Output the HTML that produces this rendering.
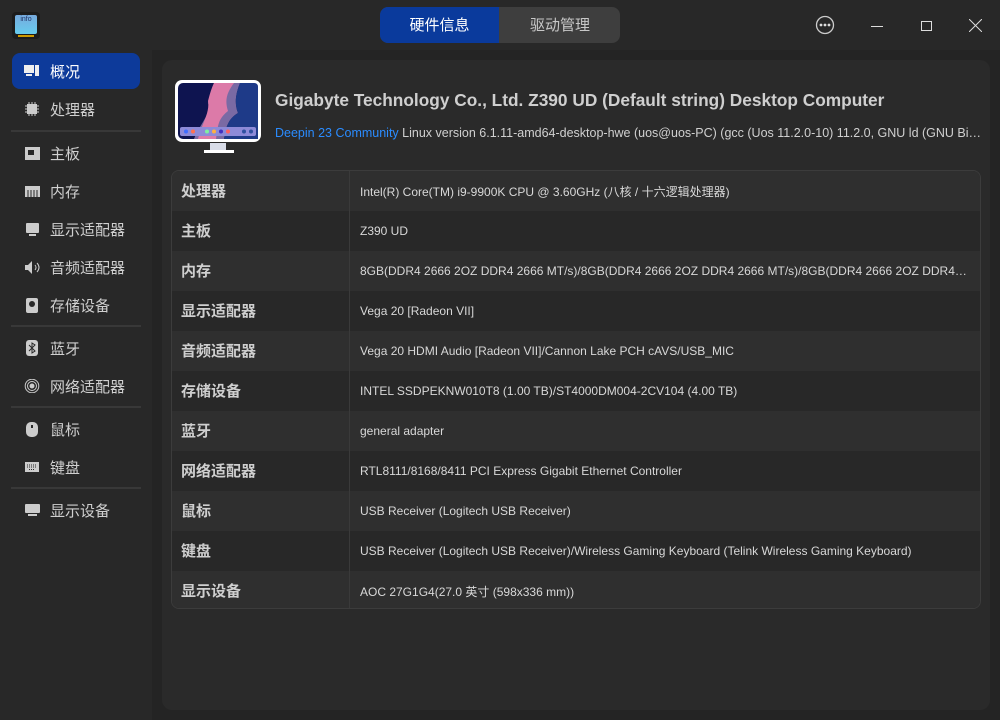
<!DOCTYPE html>
<html><head><meta charset="utf-8"><style>
*{margin:0;padding:0;box-sizing:border-box}
body{width:1000px;height:720px;background:#242424;font-family:"Liberation Sans","Noto Sans CJK SC",sans-serif;color:#d8d8d8;position:relative;overflow:hidden}
.title{position:absolute;left:0;top:0;width:1000px;height:50px;background:#282828}
.side{position:absolute;left:0;top:50px;width:152px;height:670px;background:#282828}
.item{position:absolute;left:12px;width:128px;height:36px;border-radius:8px;display:flex;align-items:center;font-size:15px;color:#d0d0d0}
.item .ic{width:16px;height:14px;margin-left:12px;margin-right:10px;display:flex;align-items:center;justify-content:center}
.item.sel{background:#0d3a9a;color:#fff}
.sep{position:absolute;left:11px;width:130px;height:2px;background:#383838}
.panel{position:absolute;left:162px;top:60px;width:828px;height:650px;background:#2a2a2a;border-radius:10px}
.table{position:absolute;left:171px;top:170px;width:810px;height:439px;border:1px solid #3c3c3c;border-radius:8px;overflow:hidden}
.row{height:40px;display:flex;align-items:center;font-size:12px;color:#d8d8d8}
.row:nth-child(odd){background:#2f2f2f}
.row:nth-child(even){background:#282828}
.row .k{width:178px;padding-left:9px;font-size:15px;font-weight:bold;color:#cfcfcf;height:100%;display:flex;align-items:center;border-right:1px solid #3a3a3a;padding-bottom:2px}
.row .v{padding-left:10px;white-space:nowrap;overflow:hidden;text-overflow:ellipsis;width:620px}
</style></head><body>
<div class="title">
 <div style="position:absolute;left:12px;top:12px;width:28px;height:27px;background:#1c1c1c;border-radius:4px">
  <div style="position:absolute;left:3px;top:3px;width:22px;height:19px;background:linear-gradient(#7ad,#6ce);border-radius:2px;font-size:7px;color:#236;text-align:center;line-height:10px">info</div>
  <div style="position:absolute;left:6px;top:23px;width:16px;height:2px;background:#c90"></div>
 </div>
 <div style="position:absolute;left:380px;top:7px;width:240px;height:36px;border-radius:8px;background:#3e3e3e;overflow:hidden;font-size:15px">
  <div style="position:absolute;left:0;top:0;width:119px;height:36px;background:#0a3a9c;color:#fff;text-align:center;line-height:38px">硬件信息</div>
  <div style="position:absolute;left:120px;top:0;width:120px;height:36px;color:#c8c8c8;text-align:center;line-height:38px">驱动管理</div>
 </div>
 <svg style="position:absolute;left:815px;top:15px" width="20" height="20"><circle cx="10" cy="10" r="8.5" fill="none" stroke="#ccc" stroke-width="1.3"/><circle cx="6" cy="10" r="1.4" fill="#ddd"/><circle cx="10" cy="10" r="1.4" fill="#ddd"/><circle cx="14" cy="10" r="1.4" fill="#ddd"/></svg>
 <div style="position:absolute;left:871px;top:26px;width:12px;height:1px;background:#ddd"></div>
 <div style="position:absolute;left:921px;top:21px;width:11px;height:10px;border:1px solid #ddd"></div>
 <svg style="position:absolute;left:969px;top:19px" width="13" height="13"><path d="M0 0L13 13M13 0L0 13" stroke="#ddd" stroke-width="1"/></svg>
</div>
<div class="side">
 <div class="item sel" style="top:3px"><span class="ic"><svg width="16" height="12"><rect x="0" y="0" width="10" height="8" fill="#eee"/><rect x="2" y="9" width="6" height="2" fill="#eee"/><rect x="11" y="0" width="4" height="11" fill="#eee"/></svg></span>概况</div>
 <div class="item" style="top:41px"><span class="ic"><svg width="14" height="14"><rect x="2" y="2" width="10" height="10" fill="#ccc"/><path d="M4 0v2M7 0v2M10 0v2M4 12v2M7 12v2M10 12v2M0 4h2M0 7h2M0 10h2M12 4h2M12 7h2M12 10h2" stroke="#ccc"/></svg></span>处理器</div>
 <div class="sep" style="top:80px"></div>
 <div class="item" style="top:85px"><span class="ic"><svg width="15" height="13"><rect width="15" height="13" fill="#ccc"/><rect x="3" y="3" width="6" height="5" fill="#282828"/></svg></span>主板</div>
 <div class="item" style="top:123px"><span class="ic"><svg width="15" height="11"><rect width="15" height="11" fill="#ccc"/><path d="M3 4v7M6 4v7M9 4v7M12 4v7" stroke="#282828"/></svg></span>内存</div>
 <div class="item" style="top:161px"><span class="ic"><svg width="13" height="13"><rect width="13" height="10" rx="1" fill="#ccc"/><rect x="3" y="11" width="7" height="2" fill="#ccc"/></svg></span>显示适配器</div>
 <div class="item" style="top:199px"><span class="ic"><svg width="15" height="13"><path d="M0 4h3l4-4v13l-4-4H0z" fill="#ccc"/><path d="M10 4q2 2.5 0 5M12 2q4 4.5 0 9" stroke="#ccc" fill="none"/></svg></span>音频适配器</div>
 <div class="item" style="top:237px"><span class="ic"><svg width="12" height="15"><rect width="12" height="15" rx="2" fill="#ccc"/><circle cx="6" cy="6" r="3" fill="#282828"/></svg></span>存储设备</div>
 <div class="sep" style="top:275px"></div>
 <div class="item" style="top:280px"><span class="ic"><svg width="12" height="16"><rect width="12" height="16" rx="3" fill="#ccc"/><path d="M3 5l6 6-3 2V3l3 2-6 6" stroke="#282828" fill="none"/></svg></span>蓝牙</div>
 <div class="item" style="top:318px"><span class="ic"><svg width="16" height="14"><circle cx="8" cy="7" r="2.5" fill="#ccc"/><circle cx="8" cy="7" r="4.5" fill="none" stroke="#ccc"/><circle cx="8" cy="7" r="6.8" fill="none" stroke="#ccc"/></svg></span>网络适配器</div>
 <div class="sep" style="top:356px"></div>
 <div class="item" style="top:361px"><span class="ic"><svg width="12" height="15"><rect width="12" height="15" rx="5" fill="#ccc"/><rect x="5" y="3" width="2" height="3" fill="#282828"/></svg></span>鼠标</div>
 <div class="item" style="top:399px"><span class="ic"><svg width="14" height="10"><rect width="14" height="10" fill="#ccc"/><path d="M2 3h10M2 5h10M4 7.5h6" stroke="#282828" stroke-dasharray="1 1"/></svg></span>键盘</div>
 <div class="sep" style="top:437px"></div>
 <div class="item" style="top:442px"><span class="ic"><svg width="15" height="13"><rect width="15" height="9" rx="1" fill="#ccc"/><rect x="3" y="10" width="9" height="2" fill="#ccc"/></svg></span>显示设备</div>
</div>
<div class="panel"></div>
<svg style="position:absolute;left:174px;top:79px" width="89" height="75">
 <rect x="1" y="1" width="86" height="62" rx="7" fill="#fff"/>
 <rect x="4" y="4" width="80" height="56" rx="5" fill="#0e1450"/>
 <path d="M40 4h26c-4 10-6 20 -2 30-10 6 -12 14-14 26H20c4-12 18-26 14-36 2-8 4-14 6-20z" fill="#7a6aa4"/>
 <path d="M40 4h20c-6 8-10 16-6 28-10 8-10 14-12 28H24c4-16 12-26 10-38 2-8 4-14 6-18z" fill="#dc7aa8"/>
 <path d="M66 4h14q4 0 4 4v52H50c2-12 4-20 14-26-4-10-2-20 2-30z" fill="#1e3a88"/>
 <rect x="6" y="48" width="76" height="9" rx="2" fill="#8d8ad8"/>
 <circle cx="12" cy="52.5" r="2" fill="#3e6cff"/><circle cx="19" cy="52.5" r="2" fill="#ff7050"/><circle cx="33" cy="52.5" r="2" fill="#7fefa0"/><circle cx="40" cy="52.5" r="2" fill="#ffb040"/><circle cx="47" cy="52.5" r="2" fill="#4030c0"/><circle cx="54" cy="52.5" r="2" fill="#ff6060"/><circle cx="70" cy="52.5" r="2" fill="#3050a0"/><circle cx="77" cy="52.5" r="2" fill="#3050a0"/>
 <rect x="36" y="64" width="16" height="7" fill="#d8dce8"/><rect x="30" y="71" width="30" height="3" fill="#fff"/>
</svg>
<div style="position:absolute;left:275px;top:90px;font-size:17.3px;font-weight:bold;color:#cfcfcf;white-space:nowrap">Gigabyte Technology Co., Ltd. Z390 UD (Default string) Desktop Computer</div>
<div style="position:absolute;left:275px;top:126px;width:708px;font-size:12.5px;color:#d0d0d0;white-space:nowrap;overflow:hidden;text-overflow:ellipsis"><span style="color:#2b8cff">Deepin 23 Community</span> Linux version 6.1.11-amd64-desktop-hwe (uos@uos-PC) (gcc (Uos 11.2.0-10) 11.2.0, GNU ld (GNU Binutils)</div>
<div class="table">
 <div class="row"><div class="k">处理器</div><div class="v">Intel(R) Core(TM) i9-9900K CPU @ 3.60GHz (八核 / 十六逻辑处理器)</div></div>
 <div class="row"><div class="k">主板</div><div class="v">Z390 UD</div></div>
 <div class="row"><div class="k">内存</div><div class="v">8GB(DDR4 2666 2OZ DDR4 2666 MT/s)/8GB(DDR4 2666 2OZ DDR4 2666 MT/s)/8GB(DDR4 2666 2OZ DDR4 266…</div></div>
 <div class="row"><div class="k">显示适配器</div><div class="v">Vega 20 [Radeon VII]</div></div>
 <div class="row"><div class="k">音频适配器</div><div class="v">Vega 20 HDMI Audio [Radeon VII]/Cannon Lake PCH cAVS/USB_MIC</div></div>
 <div class="row"><div class="k">存储设备</div><div class="v">INTEL SSDPEKNW010T8 (1.00 TB)/ST4000DM004-2CV104 (4.00 TB)</div></div>
 <div class="row"><div class="k">蓝牙</div><div class="v">general adapter</div></div>
 <div class="row"><div class="k">网络适配器</div><div class="v">RTL8111/8168/8411 PCI Express Gigabit Ethernet Controller</div></div>
 <div class="row"><div class="k">鼠标</div><div class="v">USB Receiver (Logitech USB Receiver)</div></div>
 <div class="row"><div class="k">键盘</div><div class="v">USB Receiver (Logitech USB Receiver)/Wireless Gaming Keyboard (Telink Wireless Gaming Keyboard)</div></div>
 <div class="row"><div class="k">显示设备</div><div class="v">AOC 27G1G4(27.0 英寸 (598x336 mm))</div></div>
</div>
</body></html>
